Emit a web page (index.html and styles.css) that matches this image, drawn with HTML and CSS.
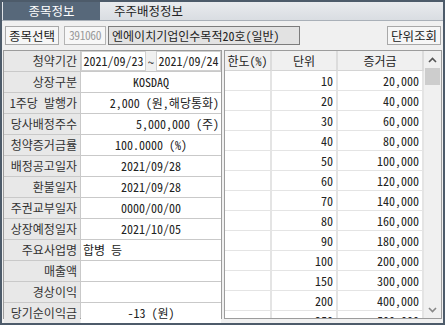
FILE: index.html
```html
<!DOCTYPE html>
<html>
<head>
    <title>종목정보</title>
    <link rel="stylesheet" href="styles.css">
</head>
<body>
    <div class="window">
        <div class="tabs">
            <div class="tab active">종목정보</div>
            <div class="tab">주주배정정보</div>
        </div>

        <div class="toolbar">
            <button class="btn">종목선택</button>
            <div class="code">391060</div>
            <div class="name">엔에이치기업인수목적20호(일반)</div>
            <div class="spacer"></div>
            <button class="btn">단위조회</button>
        </div>

        <div class="main">
            <div class="info">
                <div class="label">청약기간</div>
                <div class="period">
                    <span class="date-box">2021/09/23</span>
                    <span class="tilde">~</span>
                    <span class="date-box">2021/09/24</span>
                </div>
                <div class="label">상장구분</div>
                <div class="value center">KOSDAQ</div>
                <div class="label">1주당 발행가</div>
                <div class="value right">2,000 (원,해당통화)</div>
                <div class="label">당사배정주수</div>
                <div class="value right">5,000,000 (주)</div>
                <div class="label">청약증거금률</div>
                <div class="value center">100.0000 (%)</div>
                <div class="label">배정공고일자</div>
                <div class="value center">2021/09/28</div>
                <div class="label">환불일자</div>
                <div class="value center">2021/09/28</div>
                <div class="label">주권교부일자</div>
                <div class="value center">0000/00/00</div>
                <div class="label">상장예정일자</div>
                <div class="value center">2021/10/05</div>
                <div class="label">주요사업명</div>
                <div class="value left">합병 등</div>
                <div class="label">매출액</div>
                <div class="value"></div>
                <div class="label">경상이익</div>
                <div class="value"></div>
                <div class="label">당기순이익금</div>
                <div class="value center">-13 (원)</div>
            </div>

            <div class="units">
                <div class="grid">
                    <div class="head">한도(%)</div>
                    <div class="head">단위</div>
                    <div class="head">증거금</div>
                    <div class="cell"></div><div class="cell num">10</div><div class="cell num">20,000</div>
                    <div class="cell"></div><div class="cell num">20</div><div class="cell num">40,000</div>
                    <div class="cell"></div><div class="cell num">30</div><div class="cell num">60,000</div>
                    <div class="cell"></div><div class="cell num">40</div><div class="cell num">80,000</div>
                    <div class="cell"></div><div class="cell num">50</div><div class="cell num">100,000</div>
                    <div class="cell"></div><div class="cell num">60</div><div class="cell num">120,000</div>
                    <div class="cell"></div><div class="cell num">70</div><div class="cell num">140,000</div>
                    <div class="cell"></div><div class="cell num">80</div><div class="cell num">160,000</div>
                    <div class="cell"></div><div class="cell num">90</div><div class="cell num">180,000</div>
                    <div class="cell"></div><div class="cell num">100</div><div class="cell num">200,000</div>
                    <div class="cell"></div><div class="cell num">150</div><div class="cell num">300,000</div>
                    <div class="cell"></div><div class="cell num">200</div><div class="cell num">400,000</div>
                    <div class="cell"></div><div class="cell num">250</div><div class="cell num">500,000</div>
                </div>
                <div class="scrollbar">
                    <div class="arrow">
                        <svg width="9" height="6" viewBox="0 0 9 6"><path d="M1 5 L4.5 1.5 L8 5" fill="none" stroke="#555" stroke-width="1.6"/></svg>
                    </div>
                    <div class="thumb"></div>
                    <div class="track"></div>
                    <div class="arrow">
                        <svg width="9" height="6" viewBox="0 0 9 6"><path d="M1 1 L4.5 4.5 L8 1" fill="none" stroke="#888" stroke-width="1.6"/></svg>
                    </div>
                </div>
            </div>
        </div>
    </div>
</body>
</html>
```

FILE: styles.css
```css
body {
    margin: 0;
    font-family: "Noto Sans Mono CJK KR", "Noto Sans CJK KR", "Noto Sans", sans-serif;
    font-size: 12px;
    color: #222;
}
.window {
    width: 445px;
    height: 325px;
    box-sizing: border-box;
    border: 2px solid #4d5b6a;
    background: #f0f0f0;
    overflow: hidden;
}
.tabs {
    height: 18px;
    display: flex;
    padding-left: 1px;
    background: linear-gradient(#e9ebee, #d9dde2);
    border-bottom: 1px solid #a9b0b8;
}
.tab {
    width: 97px;
    line-height: 18px;
    text-align: center;
    font-size: 12.5px;
    color: #222;
}
.tab.active {
    background: #57687a;
    color: #fff;
}
.toolbar {
    height: 28px;
    display: flex;
    align-items: center;
    gap: 4px;
    padding: 0 2px 0 3px;
}
.btn {
    height: 19px;
    padding: 0 3px;
    font-family: inherit;
    font-size: 12.5px;
    line-height: 17px;
    color: #222;
    background: #f6f6f6;
    border: 1px solid #a8a8a8;
}
.code {
    width: 40px;
    height: 17px;
    line-height: 17px;
    text-align: center;
    font-size: 11.5px;
    letter-spacing: -0.4px;
    color: #9a9a9a;
    background: #f7f7f7;
    border: 1px solid #b4b4b4;
    margin-left: 1px;
}
.name {
    width: 184px;
    height: 17px;
    line-height: 17px;
    padding: 0 3px;
    font-size: 12px;
    white-space: nowrap;
    overflow: hidden;
    background: #e2e2e2;
    border: 1px solid #7c7c7c;
    margin-left: -2px;
}
.spacer {
    flex: 1;
}
.main {
    display: flex;
    gap: 2px;
    padding: 1px 1px 0 1px;
}
.info {
    width: 219px;
    height: 269px;
    flex: none;
    box-sizing: border-box;
    display: grid;
    grid-template-columns: 76px 140px;
    grid-template-rows: repeat(13, 1fr);
    gap: 1px;
    background: #c9c9c9;
    border: 1px solid #9c9c9c;
}
.label {
    background: #e8e8e8;
    text-align: right;
    padding-right: 3px;
    font-size: 12px;
    line-height: 20px;
    color: #333;
    white-space: nowrap;
}
.value {
    background: #fff;
    font-size: 12px;
    line-height: 20px;
    white-space: nowrap;
    overflow: hidden;
    padding: 0 2px;
}
.center {
    text-align: center;
}
.right {
    text-align: right;
}
.left {
    text-align: left;
}
.period {
    display: flex;
    align-items: center;
    background: #f0f0f0;
    overflow: hidden;
}
.date-box {
    width: 63px;
    height: 18px;
    line-height: 18px;
    text-align: center;
    font-size: 12px;
    overflow: hidden;
    background: #fff;
    border: 1px solid #d0d0d0;
}
.tilde {
    width: 10px;
    text-align: center;
}
.units {
    flex: 1;
    height: 269px;
    box-sizing: border-box;
    display: flex;
    border: 1px solid #9c9c9c;
    background: #fff;
}
.grid {
    flex: 1;
    display: grid;
    grid-template-columns: 47px 66px 1fr;
    grid-auto-rows: 20px;
    overflow: hidden;
}
.head {
    background: #f0f0f0;
    text-align: center;
    font-size: 12px;
    line-height: 19px;
    white-space: nowrap;
    border-right: 2px solid #dcdcdc;
    border-bottom: 1px solid #d4d4d4;
}
.cell {
    border-right: 2px solid #e4e4e4;
    border-bottom: 1px solid #e4e4e4;
    font-size: 12px;
    line-height: 19px;
}
.num {
    text-align: right;
    padding-right: 3px;
}
.scrollbar {
    width: 17px;
    display: flex;
    flex-direction: column;
    background: #f0f0f0;
}
.arrow {
    height: 17px;
    display: flex;
    align-items: center;
    justify-content: center;
}
.thumb {
    height: 17px;
    margin: 0 1px;
    background: #cdcdcd;
}
.track {
    flex: 1;
}
```
